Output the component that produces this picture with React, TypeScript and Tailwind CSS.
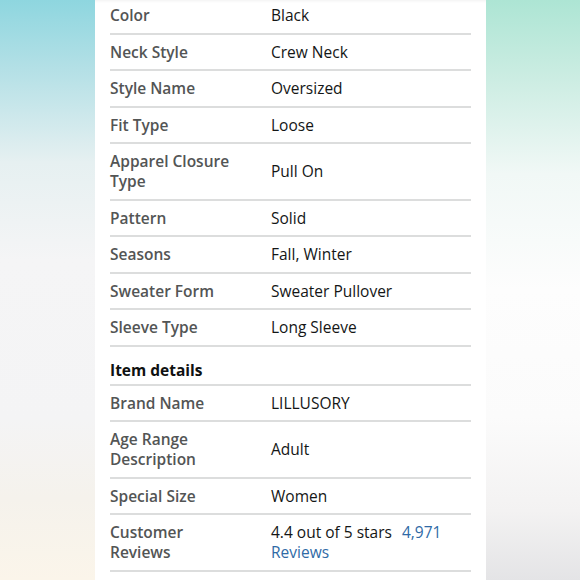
type Row = { label: string; value: React.ReactNode };

const styleRows: Row[] = [
  { label: 'Color', value: 'Black' },
  { label: 'Neck Style', value: 'Crew Neck' },
  { label: 'Style Name', value: 'Oversized' },
  { label: 'Fit Type', value: 'Loose' },
  { label: 'Apparel Closure Type', value: 'Pull On' },
  { label: 'Pattern', value: 'Solid' },
  { label: 'Seasons', value: 'Fall, Winter' },
  { label: 'Sweater Form', value: 'Sweater Pullover' },
  { label: 'Sleeve Type', value: 'Long Sleeve' },
];

const itemRows: Row[] = [
  { label: 'Brand Name', value: 'LILLUSORY' },
  { label: 'Age Range Description', value: 'Adult' },
  { label: 'Special Size', value: 'Women' },
  {
    label: 'Customer Reviews',
    value: (
      <div className="flex flex-col">
        <div>
          4.4 out of 5 stars<span className="ml-[10px] text-[#2f6aa6]">4,971</span>
        </div>
        <div className="text-[#2f6aa6]">Reviews</div>
      </div>
    ),
  },
];

function DetailRow({ label, value }: Row) {
  return (
    <div className="flex items-center border-b-2 border-[#dcdddd] py-[7.25px]">
      <div className="w-[161px] shrink-0 pr-[28px] font-semibold text-[#535555]">{label}</div>
      <div className="flex-1 pr-2 text-[#141616]">{value}</div>
    </div>
  );
}

export default function App() {
  return (
    <div className="flex h-[580px] w-[580px] overflow-hidden font-['Open_Sans',sans-serif]">
      {/* left backdrop */}
      <div className="w-[95px] shrink-0 bg-[linear-gradient(to_bottom,#8ed6df_0%,#b4e0e6_12%,#e6f0f1_28%,#f5f5f6_45%,#f4f4f5_72%,#f5f2ec_86%,#fbf5ea_100%)]"></div>

      {/* product details panel */}
      <div className="w-[391px] shrink-0 bg-white px-[15px] shadow-[inset_0_3px_3px_-2px_rgba(0,0,0,0.06)]">
        <div className="-mt-[2px] text-[15.5px] leading-[20px]">
          {styleRows.map((r) => (
            <DetailRow key={r.label} {...r} />
          ))}

          <div className="border-b-2 border-[#dcdddd] pt-[13px] pb-[4px] font-bold text-[#0f1111]">
            Item details
          </div>

          {itemRows.map((r) => (
            <DetailRow key={r.label} {...r} />
          ))}
        </div>
      </div>

      {/* right backdrop */}
      <div className="flex-1 bg-[linear-gradient(to_bottom,#ade5d4_0%,#cdede3_14%,#f1f8f6_30%,#fdfdfd_50%,#fbfbfb_72%,#f3f2f2_88%,#e4e4e6_100%)]"></div>
    </div>
  );
}
